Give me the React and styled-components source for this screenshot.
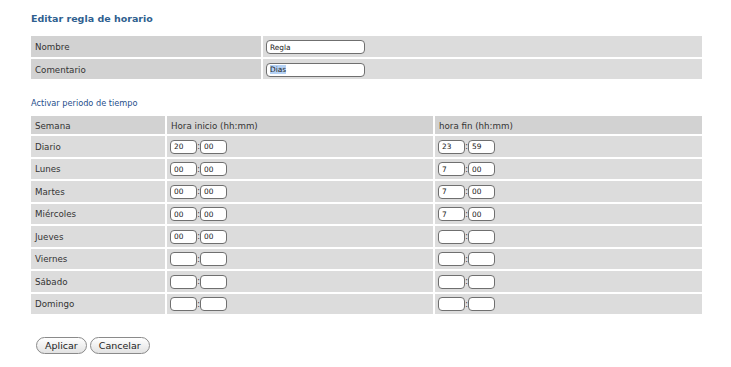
import { useEffect, useRef } from "react";
import styled, { createGlobalStyle } from "styled-components";

const GlobalStyle = createGlobalStyle`
  html, body {
    margin: 0;
    padding: 0;
    background: #ffffff;
  }
  body {
    font-family: "DejaVu Sans", Verdana, sans-serif;
    color: #333333;
  }
`;

const Page = styled.div`
  width: 671px;
  padding: 13px 0 0 31px;
`;

const Title = styled.h2`
  margin: 0 0 11px;
  font-size: 9.5px;
  line-height: 12px;
  font-weight: bold;
  color: #2f5f8f;
`;

const Grid = styled.div`
  display: grid;
  grid-template-columns: ${(p) => p.$cols};
  gap: 2px;
`;

const Cell = styled.div`
  box-sizing: border-box;
  display: flex;
  align-items: center;
  height: ${(p) => p.$h || "21px"};
  padding: 1px ${(p) => (p.$field ? "3px" : "4px")} 0;
  background: ${(p) => (p.$dark ? "#d2d2d2" : "#dcdcdc")};
  font-size: 8.7px;
  color: #333333;
  white-space: nowrap;
`;

const SectionLink = styled.div`
  margin: 19px 0 8px;
  font-size: 8.2px;
  line-height: 10px;
  color: #1f4f8c;
`;

const TextInput = styled.input`
  box-sizing: border-box;
  width: ${(p) => p.$w || "99px"};
  height: 14px;
  margin: 0;
  padding: 0 0 0 3px;
  border: 1px solid #6f6f6f;
  border-radius: 4px;
  background: #ffffff;
  font-family: "DejaVu Sans", Verdana, sans-serif;
  font-size: 7.4px;
  color: #222222;
  outline: none;

  &::selection {
    background: #b5d2f5;
    color: #222222;
  }
`;

const Colon = styled.span`
  font-size: 8px;
  width: 3px;
  text-align: center;
  color: #333333;
`;

const Actions = styled.div`
  display: flex;
  gap: 3px;
  margin: 23px 0 0 5px;
`;

const Button = styled.button`
  height: 17px;
  padding: 0 8px;
  border: 1px solid #8a8a8a;
  border-radius: 9px;
  background: linear-gradient(#ffffff, #e2e2e2);
  font-family: "DejaVu Sans", Verdana, sans-serif;
  font-size: 9.5px;
  color: #222222;
  line-height: 15px;
`;

const days = [
  { name: "Diario", start: ["20", "00"], end: ["23", "59"] },
  { name: "Lunes", start: ["00", "00"], end: ["7", "00"] },
  { name: "Martes", start: ["00", "00"], end: ["7", "00"] },
  { name: "Miércoles", start: ["00", "00"], end: ["7", "00"] },
  { name: "Jueves", start: ["00", "00"], end: ["", ""] },
  { name: "Viernes", start: ["", ""], end: ["", ""] },
  { name: "Sábado", start: ["", ""], end: ["", ""] },
  { name: "Domingo", start: ["", ""], end: ["", ""] },
];

const TimePair = ({ value }) => (
  <>
    <TextInput $w="27px" defaultValue={value[0]} />
    <Colon>:</Colon>
    <TextInput $w="27px" defaultValue={value[1]} />
  </>
);

export default function App() {
  const commentRef = useRef(null);

  useEffect(() => {
    if (commentRef.current) {
      commentRef.current.focus();
      commentRef.current.select();
    }
  }, []);

  return (
    <Page>
      <GlobalStyle />
      <Title>Editar regla de horario</Title>

      <Grid $cols="230px 1fr">
        <Cell $dark>Nombre</Cell>
        <Cell $field>
          <TextInput defaultValue="Regla" />
        </Cell>
        <Cell $dark $h="20px">Comentario</Cell>
        <Cell $field $h="20px">
          <TextInput ref={commentRef} defaultValue="Dias" />
        </Cell>
      </Grid>

      <SectionLink>Activar periodo de tiempo</SectionLink>

      <Grid $cols="134px 266px 1fr">
        <Cell $dark $h="18px">Semana</Cell>
        <Cell $dark $h="18px">Hora inicio (hh:mm)</Cell>
        <Cell $dark $h="18px">hora fin (hh:mm)</Cell>
        {days.map((d) => (
          <>
            <Cell key={d.name + "n"} $h="20.5px">{d.name}</Cell>
            <Cell key={d.name + "s"} $field $h="20.5px">
              <TimePair value={d.start} />
            </Cell>
            <Cell key={d.name + "e"} $field $h="20.5px">
              <TimePair value={d.end} />
            </Cell>
          </>
        ))}
      </Grid>

      <Actions>
        <Button>Aplicar</Button>
        <Button>Cancelar</Button>
      </Actions>
    </Page>
  );
}
